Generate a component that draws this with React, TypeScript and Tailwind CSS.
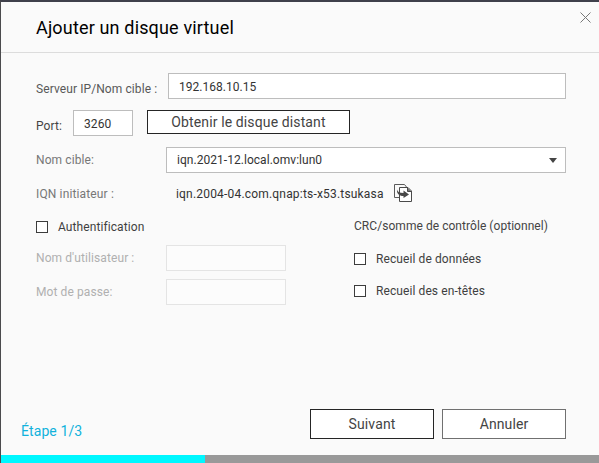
import React from "react";

function CheckBox({ label }: { label: string }) {
  return (
    <label className="flex h-3 items-center gap-2.5">
      <span className="h-3 w-3 shrink-0 border border-[#3c3c3c] bg-white" />
      <span className="whitespace-nowrap text-[#3f3f3f]">{label}</span>
    </label>
  );
}

function CopyIcon() {
  return (
    <svg width="19" height="19" viewBox="0 0 19 19" fill="none">
      <path d="M5 13.5H.5V.5H10.500L12.500 3" stroke="#5a5a5a" />
      <path d="M5.500 3.500H14L17.500 7V17.500H5.500Z" fill="#fff" stroke="#4a4a4a" />
      <path d="M13.500 3.500V7.500H17.500" fill="#777" stroke="#4a4a4a" />
      <path d="M3 5.500C3.500 8 5.500 9 9.500 9V6.500L15 10.500L9.500 14V12C5 12 2.500 9.500 3 5.500Z" fill="#484848" />
    </svg>
  );
}

export default function App() {
  return (
    <div className="h-[463px] w-[599px] overflow-hidden border-l border-t-2 border-l-[#4b4b4d] border-t-[#3f404b] bg-[#fafafa] font-[Roboto,sans-serif] text-[12px] leading-4 tracking-[0.09px]">
      <div className="flex h-full flex-col">
        <header className="flex h-[51px] shrink-0 justify-between border-b border-[#dcdcdc] pl-[35px] pr-2">
          <h1 className="pt-[14px] text-[18px] leading-6 tracking-[0.16px] text-black">Ajouter un disque virtuel</h1>
          <svg className="mt-[10px]" width="11" height="11" viewBox="0 0 11 11">
            <path d="M.5 .5L10.500 10.500M10.500 .5L.5 10.500" stroke="#777" />
          </svg>
        </header>

        <main className="flex flex-col pl-[35px] pr-[33px] pt-5 text-[#585858]">
          <div className="flex h-[26px]">
            <span className="w-[132px] whitespace-nowrap pt-2">Serveur IP/Nom cible :</span>
            <div className="flex flex-1 items-center border border-[#bdbdbd] bg-white pl-[10px] pt-0.5 tracking-[0.02px] text-[#333]">192.168.10.15</div>
          </div>

          <div className="mt-[11px] flex h-[26px] items-start">
            <span className="w-[37px] pt-2 text-[#444]">Port:</span>
            <div className="flex h-[26px] w-[60px] items-center border border-[#bdbdbd] bg-white pl-[10px] pt-0.5 text-[#333]">3260</div>
            <button className="ml-[14px] h-6 w-[203px] border border-[#252525] bg-white text-[14px] leading-[22px] tracking-[0.12px] text-[#444]">Obtenir le disque distant</button>
          </div>

          <div className="mt-[11px] flex h-[26px]">
            <span className="w-[130px] pt-[5px] text-[#777]">Nom cible:</span>
            <div className="flex flex-1 items-center justify-between border border-[#bdbdbd] bg-white pl-[10px] pr-2 tracking-[0.04px] text-[#333]">
              iqn.2021-12.local.omv:lun0
              <svg width="8" height="5" viewBox="0 0 8 5"><path d="M0 0H8L4 5Z" fill="#444" /></svg>
            </div>
          </div>

          <div className="mt-[11px] flex h-[19px]">
            <span className="w-[140px] pt-[2px] tracking-[0.14px] text-[#777]">IQN initiateur :</span>
            <span className="w-[218px] pt-[2px] tracking-[0.19px] text-[#333]">iqn.2004-04.com.qnap:ts-x53.tsukasa</span>
            <CopyIcon />
          </div>

          <div className="mt-[15px] flex">
            <section className="w-[318px] pt-[3px] text-[#b0b0b0]">
              <CheckBox label="Authentification" />
              <div className="mt-3 flex h-[26px]">
                <span className="w-[130px] pt-[5px]">Nom d'utilisateur :</span>
                <div className="w-[120px] border border-[#e4e4e4] bg-[#fcfcfc]" />
              </div>
              <div className="mt-2 flex h-[26px]">
                <span className="w-[130px] pt-[5px]">Mot de passe:</span>
                <div className="w-[120px] border border-[#e4e4e4] bg-[#fcfcfc]" />
              </div>
            </section>
            <section>
              <h2 className="mb-[19px] whitespace-nowrap tracking-[0.05px] text-[#444]">CRC/somme de contrôle (optionnel)</h2>
              <CheckBox label="Recueil de données" />
              <div className="mt-5"><CheckBox label="Recueil des en-têtes" /></div>
            </section>
          </div>
        </main>

        <footer className="mt-auto">
          <div className="flex h-[46px] pl-5 pr-[33px]">
            <span className="mr-auto pt-[13px] text-[14px] leading-[18px] text-[#10b2dc]">Étape 1/3</span>
            <button className="mr-2 h-[30px] w-[124px] border border-[#252525] bg-white text-[14px] leading-7 tracking-[0.12px] text-[#444]">Suivant</button>
            <button className="h-[30px] w-[124px] border border-[#707070] bg-white text-[14px] leading-7 tracking-[0.12px] text-[#444]">Annuler</button>
          </div>
          <div className="h-2 bg-[#999]"><div className="h-2 w-[204px] bg-[#00f7ff]" /></div>
        </footer>
      </div>
    </div>
  );
}
